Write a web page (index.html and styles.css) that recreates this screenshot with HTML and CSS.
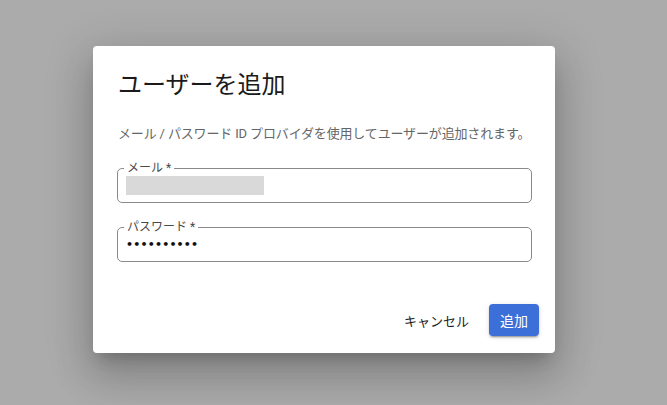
FILE: index.html
```html
<!DOCTYPE html>
<html lang="ja">
<head>
<meta charset="utf-8">
<link rel="stylesheet" href="styles.css">
</head>
<body>
<div class="backdrop">
  <div class="dialog">
    <h2 class="title">ユーザーを追加</h2>
    <p class="desc">メール / パスワード ID プロバイダを使用してユーザーが追加されます。</p>
    <fieldset class="field">
      <legend class="label">メール *</legend>
      <div class="redacted"></div>
    </fieldset>
    <fieldset class="field">
      <legend class="label">パスワード *</legend>
      <div class="value dots">••••••••••</div>
    </fieldset>
    <div class="actions">
      <button class="btn btn-text">キャンセル</button>
      <button class="btn btn-primary">追加</button>
    </div>
  </div>
</div>
</body>
</html>
```

FILE: styles.css
```css
* { box-sizing: border-box; }
html, body {
  margin: 0;
  padding: 0;
  width: 667px;
  height: 405px;
  overflow: hidden;
  font-family: Roboto, "Noto Sans CJK JP", sans-serif;
}
.backdrop {
  width: 667px;
  height: 405px;
  background: #ababab;
  display: flex;
  justify-content: flex-start;
  align-items: flex-start;
  padding-top: 46px;
  padding-left: 93px;
}
.dialog {
  width: 462px;
  height: 307px;
  background: #ffffff;
  border-radius: 4px;
  padding: 23px 23px 17px 24px;
  box-shadow: 0 11px 15px -7px rgba(0,0,0,0.2), 0 24px 38px 3px rgba(0,0,0,0.14), 0 9px 46px 8px rgba(0,0,0,0.12);
  display: flex;
  flex-direction: column;
}
.title {
  margin: 0;
  font-size: 24px;
  line-height: 32px;
  font-weight: 400;
  color: #1a1a1a;
  padding-left: 1px;
}
.desc {
  margin: 23px 0 0;
  font-size: 13px;
  line-height: 20px;
  color: #666666;
  padding-left: 1px;
  white-space: nowrap;
  letter-spacing: -0.15px;
}
.field {
  margin: 18px 0 0;
  padding: 0 8px 6px;
  border: 1px solid #8a8a8a;
  border-radius: 5px;
  height: 41px;
  min-width: 0;
}
.field + .field { margin-top: 18px; }
.label {
  font-size: 12px;
  line-height: 12px;
  padding: 0 3px;
  margin-left: -2px;
  color: #4a4a4a;
}
.redacted {
  margin-top: 2px;
  width: 138px;
  height: 19px;
  background: #d9d9d9;
}
.value {
  margin-top: 2px;
  font-size: 13px;
  line-height: 19px;
  color: #111;
}
.dots {
  letter-spacing: 0.2px;
  font-family: "DejaVu Sans", sans-serif;
  font-weight: bold;
  font-size: 11px;
}
.actions {
  margin-top: auto;
  display: flex;
  justify-content: flex-end;
  align-items: center;
  gap: 8px;
  margin-right: -7px;
}
.btn {
  font-family: Roboto, "Noto Sans CJK JP", sans-serif;
  font-size: 13px;
  height: 32px;
  border: none;
  border-radius: 4px;
  padding: 0 12px;
  cursor: pointer;
}
.btn-text {
  background: transparent;
  color: #222222;
}
.btn-primary {
  background: #3d6fd8;
  color: #ffffff;
  width: 50px;
  padding: 0;
  font-size: 14px;
  box-shadow: 0 3px 1px -2px rgba(0,0,0,0.2), 0 2px 2px 0 rgba(0,0,0,0.14), 0 1px 5px 0 rgba(0,0,0,0.12);
}
```
